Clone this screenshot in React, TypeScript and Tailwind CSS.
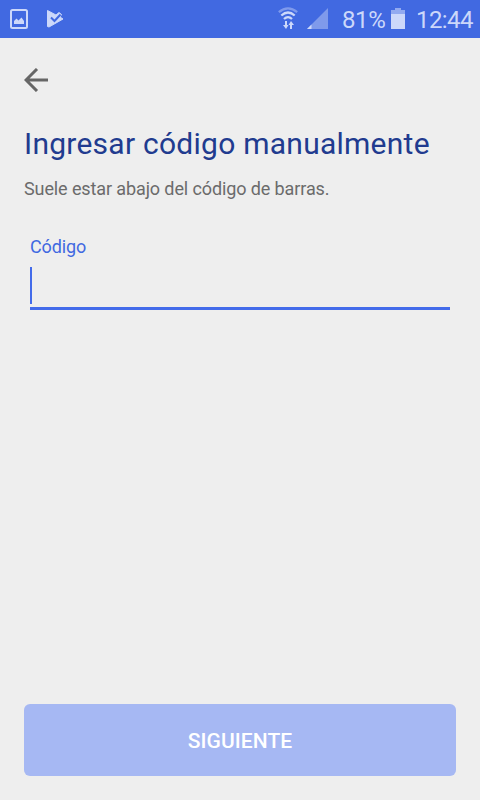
function StatusBar() {
  return (
    <header className="flex h-[38px] items-center bg-[#4169e1] text-[#ccd8fa]">
      <svg className="ml-[10px] h-[20px] w-[18px]" viewBox="0 0 18 20" fill="none">
        <rect x="1" y="1" width="16" height="18" rx="1.5" stroke="currentColor" strokeWidth="2" />
        <path d="M4 15V12L6.5 9.5L8.5 11.5L11.5 8.5L14 12v3z" fill="currentColor" />
      </svg>
      <svg className="ml-[18px] h-5 w-[18px]" viewBox="0 0 18 20">
        <path d="M1.5 1.5L10 6L13 3.5L15.5 5.5L14 8L17 10L3 18L1.5 17.5z" fill="currentColor" stroke="currentColor" strokeLinejoin="round" />
        <path d="M5 8.5l3.5 3.5 6-6.5" fill="none" stroke="#4169e1" strokeWidth="2" />
      </svg>
      <svg className="mb-[2px] ml-auto h-[23px] w-[20px]" viewBox="0 0 20 23" fill="none" stroke="currentColor" strokeWidth="2.2">
        <path d="M.8 5.2Q10-2.5 19.2 5.2" opacity=".45" />
        <path d="M3.3 8.5Q10 2.5 16.7 8.5M6 12Q10 8 14 12" />
        <path d="M8 14v5M13 22v-5" strokeWidth="2" />
        <path d="M5 18h5.5L8 22zM10.5 18H16l-3-4z" fill="currentColor" stroke="none" />
      </svg>
      <svg className="ml-[9px] h-[22px] w-[22px]" viewBox="0 0 22 22">
        <path d="M21 0V21H0z" fill="#7f9aeb" />
        <path d="M4.5 16.5V21H0z" fill="currentColor" />
      </svg>
      <span className="ml-[13px] w-11 pt-px text-[24px] tracking-[-0.4px]">81%</span>
      <svg className="mb-px ml-[5px] h-[21px] w-[14px]" viewBox="0 0 14 21">
        <path d="M4 0h6v2h4v4H0V2h4z" fill="#92aaf0" />
        <path d="M0 6h14v15H0z" fill="currentColor" />
      </svg>
      <span className="ml-[11px] mr-[6px] w-[58px] whitespace-nowrap pt-px text-[24px] tracking-[-0.6px]">12:44</span>
    </header>
  );
}

export default function App() {
  return (
    <div className="flex h-[800px] w-[480px] flex-col overflow-hidden bg-[#eeeeee] font-[Roboto,sans-serif]">
      <StatusBar />
      <main className="flex flex-1 flex-col px-6 pt-[30px] pb-6">
        <button aria-label="Volver" className="h-6 w-6 text-[#666]">
          <svg viewBox="0 0 24 24" fill="none" stroke="currentColor" strokeWidth="3">
            <path d="M24 12H2M13 1L2 12l11 11" />
          </svg>
        </button>
        <h1 className="mt-[32px] whitespace-nowrap text-[30px] leading-[40px] tracking-[0.25px] text-[#213b8f]">Ingresar código manualmente</h1>
        <p className="mt-[13px] text-[18px] leading-6 tracking-[-0.11px] text-[#6b6b6b]">Suele estar abajo del código de barras.</p>
        <div className="mx-1.5 mt-[34px] border-b-[3px] border-[#436bea]">
          <label className="block text-[18px] leading-6 tracking-[-0.1px] text-[#4169e1]">Código</label>
          <div className="mt-2 mb-[3px] h-[37px] w-0.5 bg-[#436bea]" />
        </div>
        <button className="mt-auto h-[72px] rounded-md bg-[#a6b8f3] pt-[3px] text-[21px] font-medium tracking-[0.1px] text-white">SIGUIENTE</button>
      </main>
    </div>
  );
}
